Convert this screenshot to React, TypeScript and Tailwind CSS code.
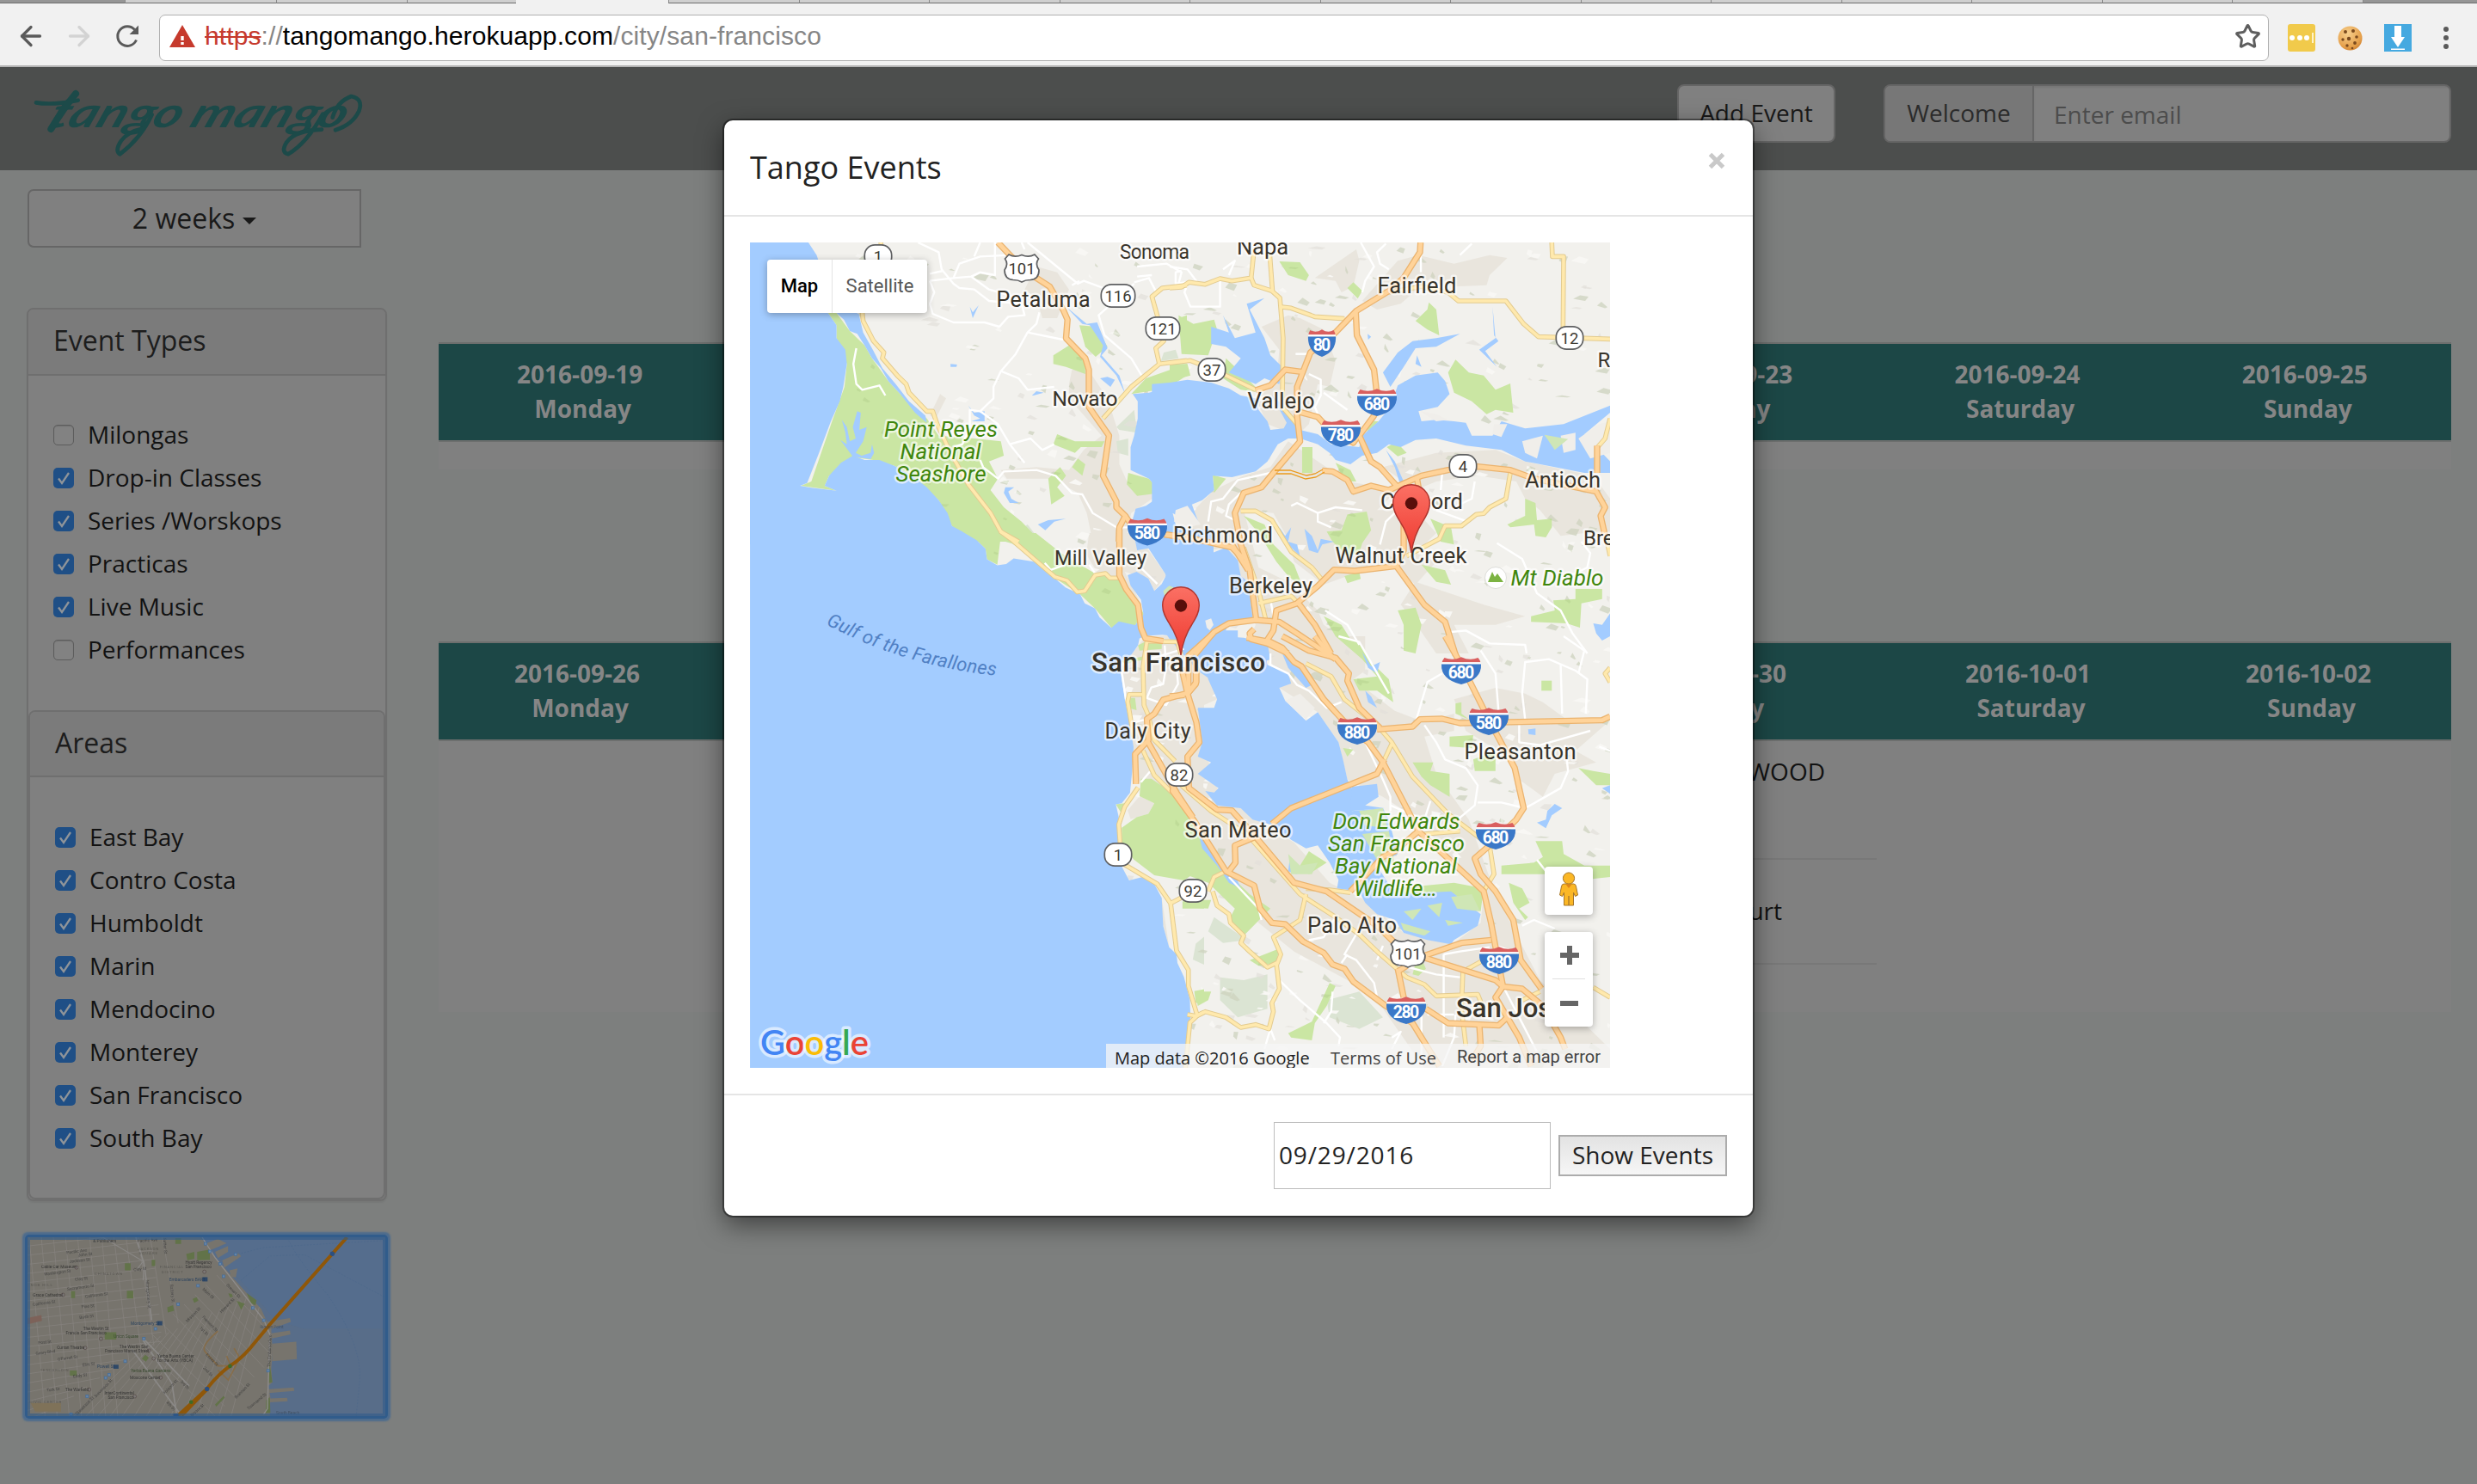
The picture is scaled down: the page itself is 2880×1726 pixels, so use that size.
import React from "react";
import { ArrowLeft, ArrowRight, Star } from "lucide-react";

/* ------------------------------------------------------------------ */
/* Map data: points are stored per tile, each tile has its own scale   */
/* ------------------------------------------------------------------ */

type Tile = "nw" | "ne" | "sw" | "se";
type Shape = [Tile, string];

const TILE: Record<Tile, string> = {
  nw: "translate(840 130) scale(0.34438 0.33333)",
  ne: "translate(1360 260) scale(0.34438 0.33333)",
  sw: "translate(860 620) scale(0.34438 0.40816)",
  se: "translate(1360 740) scale(0.34438 0.33333)",
};

const URBAN: Shape[] = [
  ["nw", "1060,540 1130,560 1170,620 1130,720 1080,720 1060,650 1020,620"],
  ["nw", "1180,900 1235,900 1300,1000 1340,1130 1340,1230 1370,1300 1440,1280 1480,1330 1380,1400 1360,1500 1250,1500 1230,1400 1200,1330 1110,1280 960,1280 940,1250 1060,1240 1170,1250 1220,1180 1280,1130 1170,1000 1170,950"],
  ["nw", "735,985 755,1000 720,1070 700,1060"],
  ["nw", "590,980 640,1020 690,1090 640,1060"],
  ["ne", "490,190 630,90 640,130 620,220 580,240 560,200"],
  ["ne", "770,130 840,110 960,140 1080,110 1140,120 1080,180 1070,215 960,220 880,190 780,280 700,300 650,270"],
  ["ne", "310,360 400,320 440,330 520,370 560,480 540,570 500,560 470,700 430,740 330,700 290,610 360,560 370,440"],
  ["ne", "400,760 600,900 770,930 700,1000 830,1000 900,1080 830,1150 900,1180 830,1260 760,1200 600,1230 520,1260 420,1180 400,1100 350,1010 250,1000 300,1200 400,1250 500,1350 520,1400 660,1500 250,1500 290,1400 240,1230 190,1130 80,1150 20,1070 110,970 150,930 250,880 340,850"],
  ["ne", "900,800 1100,790 1200,830 1430,880 1487,960 1487,1110 1400,1080 1320,1090 1250,1000 1200,960 1170,900 1040,880 900,900 830,930 720,850"],
  ["ne", "830,1250 1060,1330 1200,1370 1100,1400 960,1400 1010,1500 900,1500 820,1380 780,1330"],
  ["sw", "1290,380 1370,295 1500,290 1568,350 1568,800 1500,820 1440,740 1330,700 1320,560"],
  ["sw", "1180,0 1340,0 1440,120 1400,165 1380,130 1300,110 1355,200 1300,160 1220,130 1170,60"],
  ["sw", "1310,790 1350,750 1400,770 1380,800 1320,815"],
  ["sw", "1320,950 1400,1000 1425,1040 1450,1180 1430,1120 1370,980"],
  ["se", "0,0 100,0 160,220 95,250 110,370 160,530 240,600 420,720 540,860 660,920 790,1035 960,1070 1050,1000 1060,900 940,760 840,640 720,560 600,500 570,370 500,265 370,180 320,50 380,0 660,0 660,120 620,150 760,260 860,300 960,270 960,330 860,350 900,480 1010,640 1100,900 1250,1200 1487,1440 1487,1506 860,1506 720,1300 600,1200 420,1100 300,1000 180,830 40,600 0,520"],
  ["se", "960,220 1100,180 1200,200 1260,230 1340,290 1480,300 1370,400 1440,440 1300,480 1260,560 1180,500 1140,420 1000,330"],
  ["se", "0,1400 60,1370 60,1506 0,1506"],
];

const GREEN: Shape[] = [
  ["nw", "355,700 385,702 430,765 480,815 505,860 560,940 600,985 690,1070 730,1130 850,1140 940,1150 950,1200 900,1220 930,1280 905,1320 950,1380 1010,1430 1075,1500 835,1500 775,1445 730,1355 640,1270 580,1235 510,1215 440,1205 360,1270 345,1305 385,1322 265,1305 300,1290 370,1080 412,960 420,880 385,790 385,745"],
  ["nw", "1117,850 1170,815 1225,870 1225,915 1160,890 1117,880"],
  ["nw", "1205,745 1260,750 1300,820 1260,855 1225,820"],
  ["nw", "1130,1125 1190,1150 1290,1150 1280,1170 1210,1170 1190,1190 1117,1160"],
  ["nw", "1100,1280 1140,1240 1160,1270 1130,1310 1155,1340 1110,1370"],
  ["nw", "1200,1210 1225,1230 1215,1270 1180,1240"],
  ["nw", "1370,1260 1440,1280 1480,1330 1400,1340 1365,1300"],
  ["nw", "1380,985 1430,930 1568,880 1568,920 1500,965"],
  ["nw", "1540,720 1568,710 1568,800 1545,780"],
  ["nw", "180,456 205,456 190,466"],
  ["ne", "30,320 80,350 150,335 160,370 130,460 40,455"],
  ["ne", "370,132 440,135 470,180 460,200 400,180"],
  ["ne", "600,225 620,205 650,235 635,262"],
  ["ne", "875,275 900,300 910,390 870,370 830,340 870,300"],
  ["ne", "965,475 1010,520 1060,530 1100,580 1150,558 1155,610 1160,660 1100,650 1070,665 1020,620 960,590 940,520"],
  ["ne", "447,780 482,780 482,870 447,870"],
  ["ne", "560,835 610,860 630,900 590,900"],
  ["ne", "733,780 765,762 800,800 770,812"],
  ["ne", "530,1075 580,1070 600,1015 665,1005 680,1070 650,1115 640,1150 600,1160 550,1110"],
  ["ne", "1140,1050 1200,1020 1200,960 1235,975 1240,1035 1290,1030 1290,1060 1270,1095 1235,1090 1230,1050 1150,1060"],
  ["ne", "880,1030 950,1060 960,1120 915,1110"],
  ["ne", "250,1020 320,1050 350,1120 420,1190 450,1270 400,1230 360,1180 300,1080"],
  ["ne", "1220,1370 1300,1350 1295,1315 1370,1310 1370,1275 1460,1275 1460,1310 1390,1325 1385,1410 1340,1395 1220,1390"],
  ["ne", "770,1350 830,1340 850,1400 830,1500 790,1490 790,1400"],
  ["ne", "520,1370 580,1400 640,1500 560,1440"],
  ["ne", "145,877 190,890 150,940"],
  ["ne", "850,1190 930,1210 950,1260 900,1250"],
  ["ne", "1180,785 1220,755 1225,810 1185,800"],
  ["ne", "1265,735 1340,750 1300,790"],
  ["ne", "190,470 240,520 310,590 240,580 180,540"],
  ["ne", "590,1230 640,1215 645,1240 600,1255"],
  ["ne", "0,490 60,490 70,530 0,550"],
  ["ne", "680,690 705,690 660,740"],
  ["sw", "750,0 800,20 830,45 835,75 870,90 880,20 920,30 1020,85 1050,120 1150,175 1200,215 1255,270 1335,262 1365,230 1330,180 1280,130 1190,110 1090,60 1000,0"],
  ["sw", "1345,320 1380,305 1425,310 1425,330 1350,335"],
  ["sw", "1290,365 1370,350 1370,360 1300,372"],
  ["sw", "1310,470 1335,470 1340,505 1320,500"],
  ["sw", "1355,700 1390,700 1460,740 1540,830 1568,900 1568,950 1500,990 1400,975 1330,930 1290,880 1290,840 1340,810 1380,800 1400,770 1350,750"],
  ["sw", "1270,773 1300,770 1290,800"],
  ["sw", "1495,1050 1568,1040 1568,1070 1495,1070"],
  ["sw", "1535,1305 1568,1300 1568,1330 1540,1340"],
  ["se", "0,560 80,650 190,820 270,900 340,950 250,1045 200,990 220,950 130,860 50,830 0,840"],
  ["se", "560,0 640,20 680,90 740,150 755,230 700,190 640,190 620,150 700,140 650,80"],
  ["se", "45,920 140,920 130,950 50,945"],
  ["se", "820,440 890,440 880,470 945,480 945,560 880,520 850,490"],
  ["se", "965,235 985,230 985,270 1010,290 965,270"],
  ["se", "1255,155 1290,155 1290,190 1255,190"],
  ["se", "1025,430 1100,400 1100,470 1030,470"],
  ["se", "945,350 1025,345 1020,390 945,385"],
  ["se", "1235,715 1325,715 1330,760 1400,800 1487,800 1487,840 1400,850 1270,830 1180,830 1120,830 1120,800 1230,790 1260,770"],
  ["se", "1145,860 1190,880 1215,930 1180,950 1210,980 1200,990 1160,930"],
  ["se", "400,1385 480,1345 540,1210 560,1220 530,1290 490,1350 480,1410 410,1400"],
  ["se", "85,1240 140,1240 130,1270 95,1290"],
  ["se", "660,920 760,880 960,860 1060,880 1050,960 960,900 790,920"],
  ["se", "270,1130 370,1090 360,1140 300,1150"],
  ["se", "470,750 530,790 470,830 440,800"],
  ["se", "585,390 620,395 600,420"],
  ["se", "820,1180 840,1100 865,1160 840,1185"],
  ["se", "1380,460 1430,470 1487,480 1487,520 1440,520"],
];

const DARK_GREEN: Shape[] = [
  ["nw", "1330,1100 1390,1040 1400,1120 1340,1110"],
  ["nw", "1330,1150 1370,1140 1370,1200 1335,1190"],
  ["nw", "1490,840 1530,830 1540,860 1480,870"],
  ["nw", "980,1480 1030,1440 1075,1500"],
  ["sw", "1540,1170 1568,1150 1568,1230 1530,1215"],
  ["se", "150,980 260,1060 180,1070 130,1030"],
  ["se", "170,1190 250,1200 330,1180 330,1300 230,1330 170,1270"],
  ["se", "530,1270 640,1240 720,1330 640,1370 540,1330"],
];

const WATER: Shape[] = [
  ["nw", "93,456 290,456 318,500 350,600 400,680 460,705 475,770 510,835 540,895 585,950 630,1010 685,1060 690,1085 650,1050 600,985 560,940 535,895 505,860 480,815 455,775 430,765 410,725 385,702 355,700 385,745 385,790 415,830 420,880 408,960 396,1010 366,1080 326,1190 286,1295 262,1305 300,1312 385,1322 345,1305 360,1270 400,1225 440,1200 480,1215 530,1215 580,1235 640,1270 690,1310 730,1355 760,1400 775,1445 810,1465 835,1505 93,1510"],
  ["nw", "398,1145 420,1160 415,1120 403,1075 420,1100 430,1150 450,1140 440,1100 455,1045 467,1050 462,1110 487,1100 475,1150 450,1190 470,1200 500,1190 505,1160 512,1190 500,1212 440,1203"],
  ["sw", "35,-5 750,-5 800,20 830,45 835,75 870,92 900,88 925,72 1020,85 1045,115 1100,155 1150,175 1165,200 1200,215 1215,240 1255,270 1280,252 1335,262 1365,230 1450,240 1500,290 1430,290 1370,293 1350,300 1345,320 1320,350 1290,365 1285,390 1300,470 1320,560 1330,610 1325,680 1318,740 1290,770 1270,773 1280,810 1278,860 1290,950 1315,990 1360,980 1400,1000 1425,1040 1430,1120 1450,1180 1475,1200 1478,1225 1500,1265 1520,1330 1522,1380 1510,1440 1505,1530 35,1530"],
  ["nw", "1385,985 1440,980 1500,965 1568,945 1568,1430 1520,1400 1530,1440 1570,1500 1400,1530 1390,1480 1380,1440 1395,1385 1430,1375 1465,1350 1480,1330 1440,1280 1378,1250 1378,1170 1390,1130 1402,1070 1402,1010"],
  ["ne", "-60,560 0,555 60,545 140,555 200,575 240,600 290,610 300,650 330,690 340,720 385,715 395,695 345,600 400,650 440,720 500,735 545,770 640,780 650,740 705,690 745,640 770,565 830,530 905,520 930,550 945,595 905,640 840,655 850,690 900,685 960,690 1000,695 1020,740 1090,740 1120,690 1200,715 1330,700 1487,635 1487,660 1400,735 1487,830 1487,870 1400,870 1300,850 1200,830 1120,790 1000,775 900,750 830,755 780,780 740,770 700,800 650,810 610,840 560,825 540,800 500,770 440,750 400,750 365,770 330,830 290,865 210,885 145,880 150,930 110,965 75,980 100,1050 15,1010 -60,1010"],
  ["ne", "-60,1000 0,1010 20,1075 80,1150 130,1155 190,1130 230,1175 240,1230 265,1250 280,1375 200,1395 180,1440 250,1445 330,1465 340,1520 150,1600 95,1560 0,1450 -20,1420 -10,1250 -30,1120"],
  ["sw", "1345,-10 1370,30 1440,120 1425,145 1400,165 1380,130 1340,110 1310,120 1320,150 1355,190 1365,240 1430,290 1530,300 1600,320 1600,-10"],
  ["se", "110,-20 110,50 130,150 160,220 150,250 95,250 110,370 95,420 140,440 95,480 165,530 150,545 120,540 160,590 240,600 280,640 350,660 410,710 460,740 500,730 540,790 570,850 565,880 640,890 660,930 700,970 760,990 790,1035 870,1060 950,1075 960,1060 1040,1010 1050,970 950,890 760,900 700,800 770,760 740,640 720,600 615,610 620,540 600,500 585,430 570,370 530,310 500,265 460,295 390,225 370,180 410,165 400,130 330,100 320,50 230,35 230,-20"],
  ["se", "615,525 700,515 705,560 660,590 725,600 610,610"],
  ["se", "380,60 440,110 480,170 460,180 400,110"],
  ["ne", "140,360 200,380 180,320 220,400 290,380 260,280 320,260 270,300 320,400 340,460 380,500 370,560 320,540 290,560 200,520 240,470 190,430 140,420"],
  ["ne", "720,520 770,450 820,410 900,400 980,385 900,430 830,435 790,500 745,570"],
  ["ne", "1045,440 1100,400 1090,290 1095,390 1110,410 1065,445 1105,500"],
  ["ne", "370,1060 390,1090 410,1060 400,1110 430,1120 440,1160 410,1130 370,1090"],
  ["ne", "455,1065 480,1090 500,1140 510,1100 555,1110 515,1120 500,1150 470,1140"],
  ["ne", "1430,1395 1460,1400 1487,1360 1487,1440 1460,1455 1440,1430"],
  ["ne", "730,790 760,830 790,900 775,900 760,850"],
  ["ne", "668,385 680,395 670,405"],
  ["ne", "790,470 800,465 798,490"],
  ["ne", "835,460 850,500 830,490"],
  ["nw", "1160,680 1230,740 1265,735 1300,825 1280,850 1340,920 1360,985 1330,920 1275,855 1285,815 1240,745 1215,740"],
  ["nw", "830,1025 850,1050 885,1045 885,1080 840,1080 870,1070 850,1060"],
  ["nw", "835,680 845,700 865,675 845,720"],
  ["nw", "1045,990 1060,975 1085,980 1050,990"],
  ["nw", "770,880 792,882 790,890 770,890"],
  ["nw", "955,1310 985,1310 965,1325 975,1350 1000,1365 970,1365 950,1330"],
  ["nw", "1065,1440 1100,1425 1160,1420 1120,1430 1090,1460"],
  ["nw", "1275,930 1300,925 1325,935 1310,960"],
  ["se", "95,680 170,790 220,830 240,880 200,860 160,800 110,740"],
  ["se", "1240,650 1270,640 1275,610 1300,585 1325,600 1290,625 1270,670"],
  ["se", "650,55 680,105 710,90 700,130 670,110"],
  ["se", "1210,325 1235,322 1235,345 1212,342"],
  ["se", "660,190 680,210 700,250 670,230"],
  ["se", "1460,530 1487,520 1487,550"],
  ["se", "405,780 440,810 430,830 400,820"],
];

const LAND_OVER_WATER: Shape[] = [
  ["ne", "120,1385 140,1378 148,1400 135,1420 125,1410"],
  ["ne", "20,1000 60,985 105,1050 60,1060 15,1040"],
  ["ne", "845,655 900,665 940,685 900,690"],
  ["ne", "1095,700 1140,700 1120,745 1090,735"],
  ["ne", "1190,760 1260,740 1240,820 1200,800"],
  ["ne", "1320,740 1370,730 1370,790 1330,800"],
  ["ne", "1380,750 1450,700 1487,690 1487,800 1420,820"],
  ["se", "390,225 440,200 490,250 460,290"],
];

const ISLAND_GREEN: Shape[] = [
  ["sw", "1430,165 1450,150 1465,155 1445,175 1435,180"],
  ["se", "650,690 740,680 760,800 700,780"],
  ["se", "790,960 850,950 820,990"],
  ["se", "870,940 920,930 910,980"],
  ["se", "930,990 990,1000 940,1010"],
  ["se", "640,610 720,600 735,670 660,660"],
  ["se", "400,760 440,800 500,790 480,830 410,830"],
  ["se", "950,910 1020,900 1048,960 970,950"],
  ["se", "780,1000 880,1030 860,1045 790,1025"],
  ["ne", "1265,737 1345,752 1300,790"],
];

const MINOR: Shape[] = [
  ["nw", "660,456 730,490 740,550 780,600 800,615 850,620 900,660 1010,670 1020,710 965,715 935,750 885,735 780,735 710,705 700,670 715,630 700,590"],
  ["nw", "700,590 780,580 800,530 870,505 970,500"],
  ["nw", "870,456 850,505"],
  ["nw", "920,456 920,570 870,560 840,575 780,580"],
  ["nw", "840,575 900,620 1000,650"],
  ["nw", "700,565 745,555"],
  ["nw", "1020,480 1010,456"],
  ["nw", "1030,456 1200,600 1220,590 1285,615"],
  ["nw", "1180,605 1205,590"],
  ["nw", "1390,600 1270,710 1290,780 1380,860 1415,920"],
  ["nw", "1390,595 1440,580 1470,640"],
  ["nw", "1070,700 1060,740 1030,770 990,845 940,905 915,960 915,1000 870,1045 835,1040 835,1100 810,1160 780,1170"],
  ["nw", "1030,770 1150,795"],
  ["nw", "940,905 1000,930 1030,970 1120,960"],
  ["nw", "870,1045 930,1090 970,1160 1020,1225"],
  ["nw", "970,1160 1040,1140 1080,1180 1120,1160"],
  ["nw", "870,1215 880,1240 930,1280 950,1255 1060,1250 1125,1270 1180,1330 1215,1335 1250,1400 1330,1450 1370,1450"],
  ["nw", "452,825 442,880 452,950 472,970 530,955 550,990"],
  ["nw", "1400,540 1500,530 1550,560 1540,600"],
  ["nw", "1400,575 1450,570"],
  ["ne", "0,150 60,160 90,200 20,210 20,170 40,165"],
  ["ne", "60,210 50,240 70,290 170,290 170,200"],
  ["ne", "180,160 220,130 200,180"],
  ["ne", "645,66 690,150 660,200 650,240"],
  ["ne", "730,70 700,100 710,140 740,160"],
  ["ne", "848,110 848,170"],
  ["ne", "980,110 1020,70"],
  ["ne", "470,525 510,545 510,600 490,640 510,690"],
  ["ne", "425,455 470,455"],
  ["ne", "520,590 600,650"],
  ["ne", "340,870 230,895 180,960 140,970 130,1040"],
  ["ne", "240,940 200,980 190,1020 230,1040"],
  ["ne", "410,985 430,975 500,1010 560,990 650,1000"],
  ["ne", "500,1010 500,1040 545,1060"],
  ["ne", "760,1010 730,1040 710,1120"],
  ["ne", "920,870 915,930"],
  ["ne", "1030,900 1020,960 960,990"],
  ["ne", "900,1000 1005,1040"],
  ["ne", "1105,1115 1190,1170 1240,1290 1320,1350 1360,1430 1410,1500"],
  ["ne", "1390,1110 1420,1150 1410,1200 1350,1230"],
  ["ne", "340,1310 350,1370"],
  ["ne", "950,1425 1000,1420 1080,1465 1200,1470 1205,1500"],
  ["ne", "525,1350 600,1400 640,1470"],
  ["sw", "1030,85 1050,105 1100,90"],
  ["sw", "1180,90 1200,115"],
  ["sw", "1300,65 1350,95 1410,145"],
  ["sw", "1290,395 1305,480"],
  ["sw", "1435,320 1440,380 1430,430 1390,440 1375,470 1440,490 1480,430 1475,380"],
  ["sw", "1380,360 1500,330"],
  ["sw", "1330,540 1375,530"],
  ["sw", "1355,710 1385,680"],
  ["se", "570,0 640,20 740,200"],
  ["se", "340,60 340,100 400,130 430,170 470,190 530,250 580,230"],
  ["se", "660,370 720,500 745,560 745,610"],
  ["se", "860,310 900,370 930,430 1000,460 1040,520 1030,590 960,650"],
  ["se", "745,590 790,610 860,640 880,575"],
  ["se", "830,300 870,160 920,130"],
  ["se", "1050,50 1100,130 1110,260"],
  ["se", "1200,290 1190,200 1200,90 1280,80 1370,120 1410,150 1405,270"],
  ["se", "1330,0 1400,50 1380,130"],
  ["se", "1320,100 1325,270"],
  ["se", "1180,310 1180,370 1250,380 1420,330"],
  ["se", "1335,380 1345,470 1320,530 1200,600 1120,580 1040,580"],
  ["se", "1240,780 1270,820"],
  ["se", "1190,1010 1230,990 1300,1020"],
  ["se", "200,840 300,950 310,990"],
  ["se", "360,1190 440,1270 530,1350 575,1400 570,1430"],
  ["se", "550,1240 545,1310 520,1350"],
  ["se", "320,1440 340,1370 355,1410"],
  ["se", "470,1060 520,1050 560,980"],
  ["se", "630,1040 590,1110 630,1130 690,1210 700,1260"],
  ["se", "600,1110 580,1140"],
  ["se", "690,1100 750,1140 900,1180 980,1190"],
  ["se", "850,1320 850,1500"],
  ["se", "925,1110 925,1400"],
  ["se", "965,1320 960,1400 920,1500"],
  ["se", "925,1110 980,1100 1080,1085"],
  ["se", "870,1320 960,1320"],
  ["se", "1130,1230 1180,1330 1240,1450"],
  ["se", "1100,1080 1160,1100"],
  ["se", "700,1130 720,1080"],
  ["se", "750,1400 780,1380 750,1440"],
  ["se", "1450,385 1487,400"],
];

const SECONDARY: Shape[] = [
  ["nw", "535,456 535,480"],
  ["nw", "472,700 475,730 510,800 545,840 540,860 590,920 620,950 630,980 690,1045 710,1045 725,1090 770,1190 830,1300 905,1400 940,1465 1000,1500"],
  ["sw", "880,-5 920,20 1065,125 1105,135 1140,168 1165,165 1200,120 1235,115 1250,128 1280,128"],
  ["nw", "1285,1070 1380,960 1475,880 1568,868"],
  ["ne", "0,487 70,478 150,510 290,580"],
  ["nw", "1568,605 1485,615 1450,645 1465,700 1490,800 1463,825 1475,880"],
  ["ne", "0,225 40,222 65,205 120,212 170,192 210,200 275,190 285,90"],
  ["ne", "275,190 285,215 345,235 372,260 383,400 380,640 430,700"],
  ["ne", "338,110 347,235"],
  ["ne", "372,290 410,295 490,325 590,332"],
  ["ne", "740,240 850,220 940,240 975,270 1135,270 1195,350 1245,395 1487,403"],
  ["ne", "1290,66 1292,115 1330,115 1328,370"],
  ["ne", "1487,680 1470,750 1445,780"],
  ["ne", "1150,870 1135,960 1080,990 1060,1012 1035,1015 985,1055 930,1055 910,1100 800,1160"],
  ["ne", "240,1003 290,1003 345,1035 410,1145 480,1200 520,1250"],
  ["ne", "250,1130 300,1280 325,1385"],
  ["ne", "300,1325 410,1300 435,1325"],
  ["ne", "1470,1080 1487,1160"],
  ["sw", "1285,890 1280,830 1300,780 1345,725"],
  ["sw", "1300,945 1410,1000 1455,1055 1475,1190 1515,1245 1515,1290 1545,1375 1520,1395 1505,1525"],
  ["sw", "1455,1055 1500,1035"],
  ["sw", "1545,1375 1568,1365"],
  ["sw", "1490,345 1478,310 1375,308 1362,380 1365,490 1380,520 1400,590 1470,650"],
  ["sw", "1360,460 1315,460 1310,480 1330,580"],
  ["sw", "1362,620 1400,690 1460,740"],
  ["se", "20,500 50,530 140,610 260,690 440,900 560,980 640,1040 700,1100 800,1190 860,1215 900,1255 1040,1250 1060,1300"],
  ["se", "460,95 545,140 590,220 700,310 750,370 820,490 940,620 1080,730 1095,830 1060,890"],
  ["se", "725,430 750,375"],
  ["se", "860,690 980,680"],
  ["se", "460,880 540,885 610,895"],
  ["se", "130,890 150,840 190,820"],
  ["se", "145,890 160,940 200,970 205,1000 250,1045 240,1070 270,1100 330,1155 360,1140 370,1230 345,1280 350,1310 335,1370 290,1355 240,1365 190,1330 120,1310 90,1325 60,1320"],
  ["se", "460,900 440,990 350,1050 375,1110 360,1150"],
  ["se", "1060,1130 990,1170 985,1300 1000,1430"],
  ["se", "1487,110 1470,130 1487,160"],
  ["se", "1430,1225 1487,1260"],
  ["se", "1190,1270 1250,1240"],
];

const MOTORWAY: Shape[] = [
  ["nw", "930,456 975,505 1060,580 1105,610 1150,690 1165,725 1160,790 1225,860 1237,900 1237,1030 1305,1130 1285,1270 1330,1360 1330,1380 1360,1410 1340,1450 1338,1500"],
  ["nw", "1360,1410 1380,1440"],
  ["nw", "1490,1475 1568,1485"],
  ["sw", "1282,-10 1282,120 1305,160 1345,205 1355,270 1370,300 1430,308"],
  ["ne", "-10,1086 60,1095 210,1130 250,1170"],
  ["ne", "290,582 340,565 390,510 450,518"],
  ["ne", "847,66 845,100 790,190 740,235 630,305 560,380 475,450 430,570 430,670 440,760 350,870 310,920 250,940 220,1010 240,1120 270,1210 292,1383"],
  ["ne", "628,305 632,390 690,510 700,600 690,670 640,740 680,830 710,850 770,920"],
  ["ne", "790,940 790,1140 765,1195 860,1330 930,1390 965,1505"],
  ["ne", "430,655 500,675 540,720 620,765 650,720"],
  ["ne", "515,862 550,865 600,895 620,935 680,915 740,930 850,880 940,860 1040,848 1150,860 1230,890 1440,935 1470,990 1455,1020 1470,1090"],
  ["ne", "835,890 840,920"],
  ["ne", "1443,775 1443,870"],
  ["ne", "210,1120 265,1210"],
  ["ne", "765,1195 625,1212 555,1208 500,1265 430,1325 360,1350 350,1420 325,1460"],
  ["ne", "85,1505 150,1425 200,1395 290,1383 370,1390 430,1430 560,1520"],
  ["ne", "435,1325 490,1400 545,1500"],
  ["ne", "285,1415 270,1430 275,1450 330,1465 400,1500"],
  ["sw", "1600,285 1515,350 1515,455 1430,475 1400,515 1375,530 1380,590 1335,630 1338,715"],
  ["sw", "1540,360 1540,430 1515,455"],
  ["sw", "1375,590 1435,680 1475,740 1530,810"],
  ["se", "0,210 50,205"],
  ["se", "40,110 60,200 90,300 100,370 60,420 65,530 160,605 210,608 290,700 420,860 530,890 700,1010 800,1110"],
  ["se", "90,110 90,160 60,200"],
  ["se", "260,5 340,20 380,40 420,90 445,105 520,220 600,310 670,370 720,440 840,680 1060,890 1085,1000 1110,1140 1125,1220"],
  ["se", "380,0 470,50 560,75 605,130 600,155 640,250 710,320"],
  ["se", "490,0 550,75"],
  ["se", "700,325 820,315 845,290 920,288 980,303 1460,293 1487,280"],
  ["se", "930,0 990,110 1077,290 1165,460 1195,600 1170,640 1080,730 1030,775 1050,830 1100,890 1160,990 1185,1130 1255,1230"],
  ["se", "345,655 410,600 700,480 725,430"],
  ["se", "15,505 10,540 80,640 190,820 285,870 305,950 345,1000 390,1005 450,1065 520,1105 550,1145 590,1160 620,1205 730,1290 820,1350 880,1450 910,1500"],
  ["se", "200,820 222,790 220,730 290,700"],
  ["se", "610,890 720,770 760,750 840,680"],
  ["se", "865,1300 940,1350 1110,1358 1150,1320"],
  ["se", "850,1118 985,1070 1085,1060"],
  ["se", "850,1118 1100,1200 1125,1222 1190,1230 1260,1290 1320,1400 1335,1440"],
  ["se", "1125,1222 1100,1260 1140,1330 1180,1400 1220,1500"],
  ["se", "770,1160 790,1260"],
  ["se", "800,1150 770,1170"],
  ["se", "1045,1350 1050,1430 1020,1480"],
];

function speckles(n: number, seed: number) {
  let s = seed;
  const rnd = () => {
    s = (s * 16807) % 2147483647;
    return s / 2147483647;
  };
  return Array.from({ length: n }, () => {
    const x = 980 + rnd() * 890;
    const y = 285 + rnd() * 955;
    const w = 3 + rnd() * 8;
    const h = 2 + rnd() * 8;
    return `${x},${y} ${x + w},${y + h * rnd()} ${x + w * 0.6},${y + h} ${x - w * rnd()},${y + h * 0.6}`;
  });
}
const GREY_SPECKLES = speckles(620, 41);
const PALE_SPECKLES = speckles(300, 977);

const Polys = ({ items, fill }: { items: Shape[]; fill: string }) => (
  <>
    {items.map(([t, p], i) => (
      <polygon key={i} points={p} transform={TILE[t]} fill={fill} />
    ))}
  </>
);
const Lines = ({ items, stroke, width }: { items: Shape[]; stroke: string; width: number }) => (
  <>
    {items.map(([t, p], i) => (
      <polyline key={i} points={p} transform={TILE[t]} fill="none" stroke={stroke} strokeWidth={width} strokeLinejoin="round" vectorEffect="non-scaling-stroke" />
    ))}
  </>
);

/* text, x, baseline, width, size */
const TOWNS: [string, number, number, number, number][] = [
  ["Sonoma", 1302, 300.5, 81, 23],
  ["Petaluma", 1158.5, 357, 109, 25],
  ["Novato", 1223.6, 471.5, 76, 24.5],
  ["Napa", 1438, 296, 60, 25.5],
  ["Fairfield", 1601.5, 341, 92, 25.5],
  ["Vallejo", 1450.5, 474.5, 78, 25.5],
  ["Richmond", 1364, 631, 116, 25.5],
  ["Berkeley", 1429, 690, 97, 25.5],
  ["Walnut Creek", 1552.5, 655, 153, 25.5],
  ["Concord", 1605, 592, 96, 25.5],
  ["Antioch", 1773, 567, 88, 25.5],
  ["Mill Valley", 1226, 657, 107, 23.5],
  ["Daly City", 1284.5, 859, 100, 25],
  ["San Mateo", 1377.5, 974, 124, 25.5],
  ["Palo Alto", 1520, 1085, 104, 25.5],
  ["Pleasanton", 1702.5, 883, 130, 25.5],
];
const PARKS: [string, number, number, number][] = [
  ["Point Reyes", 1028, 508, 132],
  ["National", 1046.5, 534, 94],
  ["Seashore", 1041.5, 560, 105],
  ["Don Edwards", 1549.5, 964, 148],
  ["San Francisco", 1544, 990, 159],
  ["Bay National", 1552, 1016, 142],
  ["Wildlife…", 1574, 1042, 97],
  ["Mt Diablo", 1756.5, 681, 108],
];
const PILLS: [string, number, number][] = [
  ["1", 1021, 298], ["116", 1300, 344], ["121", 1352, 382], ["37", 1409, 430], ["12", 1825, 393],
  ["4", 1701, 542], ["82", 1371, 901], ["1", 1300, 994], ["92", 1387, 1036],
];
const INTERSTATES: [string, number, number][] = [
  ["580", 1334, 618.5], ["80", 1537, 399], ["680", 1601, 468], ["780", 1559, 504], ["680", 1699, 780],
  ["880", 1578, 850], ["580", 1731, 839], ["680", 1739, 972], ["880", 1743, 1117], ["280", 1635, 1175],
];
const US_ROUTES: [string, number, number][] = [["101", 1188, 311], ["101", 1637, 1108]];
const PINS: [number, number][] = [[1373, 762], [1641, 643]];

function BayMap() {
  return (
    <svg width="1000" height="960" viewBox="872 282 1000 960" className="block" fontFamily="Roboto, sans-serif">
      <defs>
        <linearGradient id="pin" x1="0" y1="0" x2="0" y2="1">
          <stop offset="0" stopColor="#fb7064" />
          <stop offset="1" stopColor="#ee3a30" />
        </linearGradient>
        <path id="gulf" d="M960 726 Q1052 775 1160 786" />
      </defs>
      <rect x="872" y="282" width="1000" height="960" fill="#f2f1ed" />
      <Polys items={URBAN} fill="#e9e5dd" />
      <Polys items={DARK_GREEN} fill="#dbe4d3" />
      {GREY_SPECKLES.map((p, i) => <polygon key={i} points={p} fill="#e2e0da" opacity=".7" />)}
      {PALE_SPECKLES.map((p, i) => <polygon key={i} points={p} fill="#f8f7f4" />)}
      <Polys items={GREEN} fill="#cae6a3" />
      <g opacity=".18">
        {GREY_SPECKLES.slice(0, 420).map((p, i) => <polygon key={i} points={p} fill="#8fae6a" />)}
      </g>
      <Polys items={WATER} fill="#a3ccff" />
      <Polys items={LAND_OVER_WATER} fill="#f0eeea" />
      <Polys items={ISLAND_GREEN} fill="#cfe6b6" />
      <Lines items={MINOR} stroke="#ffffff" width={2.4} />
      <Lines items={SECONDARY} stroke="#e3cb90" width={5.6} />
      <Lines items={SECONDARY} stroke="#ffe9ad" width={3.6} />
      <Lines items={MOTORWAY} stroke="#ebb470" width={7.4} />
      <Lines items={MOTORWAY} stroke="#ffd399" width={4.8} />
      <g fill="none" stroke="#ea9a1c" strokeWidth="1.3">
        <path d="M1482 547 L1500 547 L1519 553 L1529 551 L1538 546 M1484 551 L1501 551 L1518 557 L1530 555 L1540 549" />
      </g>

      {PILLS.map(([t, x, y], i) => {
        const w = t.length === 3 ? 41 : 33;
        return (
          <g key={i}>
            <rect x={x - w / 2 + 0.8} y={y - 13.2} width={w - 1.6} height={26.4} rx="12" fill="#fff" stroke="#5f6062" strokeWidth="1.7" />
            <text x={x} y={y + 6.5} fontSize="18.5" textAnchor="middle" fill="#3d3a32">{t}</text>
          </g>
        );
      })}
      {US_ROUTES.map(([t, x, y], i) => (
        <g key={i} transform={`translate(${x} ${y})`}>
          <path d="M-15 -15 Q-8 -11 0 -14.5 Q8 -11 15 -15 L19.5 -10 Q15 -4 20 3 Q20 14 10 14.5 Q4 14.5 0 17 Q-4 14.5 -10 14.5 Q-20 14 -20 3 Q-15 -4 -19.5 -10 Z" fill="#fff" stroke="#5f6062" strokeWidth="1.7" />
          <text y="8" fontSize="18.5" textAnchor="middle" fill="#3d3a32">{t}</text>
        </g>
      ))}
      {INTERSTATES.map(([t, x, y], i) => {
        const s = t.length === 3 ? 1 : 0.7;
        return (
          <g key={i} transform={`translate(${x} ${y})`}>
            <g transform={`scale(${s} 1)`}>
              <path d="M-22.5 -9.5 Q-22 -12 -19.5 -15 Q-10 -11 0 -15.8 Q10 -11 19.5 -15 Q22 -12 22.5 -9.5 Z" fill="#d95f5f" />
              <rect x="-22.8" y="-9.8" width="45.6" height="2.4" fill="#fff" />
              <path d="M-23 -7.6 H23 Q24 10 0 16 Q-24 10 -23 -7.6Z" fill="#3a78c8" />
            </g>
            <text y="8.5" fontSize="19.5" fontWeight="700" textAnchor="middle" fill="#fff" textLength={t.length * 10.2}>{t}</text>
          </g>
        );
      })}

      <g fill="#38342b" stroke="#fff" strokeOpacity=".65" strokeWidth="5" strokeLinejoin="round" paintOrder="stroke">
        {TOWNS.map(([t, x, y, w, s]) => (
          <text key={t} x={x} y={y} fontSize={s} textLength={w}>{t}</text>
        ))}
        <text x="1841" y="634" fontSize="24">Bre</text>
        <text x="1857.500" y="427" fontSize="24">R</text>
        <text x="1269" y="781" fontSize="31" fontWeight="500" textLength="202">San Francisco</text>
        <text x="1693" y="1183" fontSize="31" fontWeight="500">San Jose</text>
      </g>
      <g fill="#3f860d" fontStyle="italic" stroke="#fff" strokeOpacity=".65" strokeWidth="5" strokeLinejoin="round" paintOrder="stroke">
        {PARKS.map(([t, x, y, w]) => (
          <text key={t + y} x={x} y={y} fontSize="26" textLength={w}>{t}</text>
        ))}
      </g>
      <circle cx="1739" cy="672" r="12.5" fill="#fff" stroke="#d6d6d0" strokeWidth=".8" />
      <path d="M1730 677 L1735 665 L1738 671 L1741 667 L1748 677Z" fill="#7cb342" />
      <text fontSize="22" fontStyle="italic" fill="#5080c4">
        <textPath href="#gulf" textLength="208">Gulf of the Farallones</textPath>
      </text>

      {PINS.map(([x, y]) => (
        <g key={x} transform={`translate(${x} ${y})`}>
          <path d="M0 0 C-2 -14 -5 -24 -13 -36 C-18 -44 -21.300 -50 -21.300 -58 A21.300 21.300 0 0 1 21.300 -58 C21.300 -50 18 -44 13 -36 C5 -24 2 -14 0 0Z" fill="url(#pin)" stroke="#b1362f" strokeWidth="1.4" />
          <circle cy="-57.500" r="7.200" fill="#590f0b" />
        </g>
      ))}

      <g fontFamily="Lato, sans-serif" fontSize="40" fontWeight="600" stroke="#fff" strokeOpacity=".6" strokeWidth="7" strokeLinejoin="round" paintOrder="stroke">
        <text x="884" y="1227" textLength="126">
          <tspan fill="#4285f4">G</tspan>
          <tspan fill="#ea4335">o</tspan>
          <tspan fill="#fbbc05">o</tspan>
          <tspan fill="#4285f4">g</tspan>
          <tspan fill="#34a853">l</tspan>
          <tspan fill="#ea4335">e</tspan>
        </text>
      </g>
    </svg>
  );
}

/* ------------------------------------------------------------------ */
/* Browser chrome                                                      */
/* ------------------------------------------------------------------ */

const TAB_WIDTHS = [
  "w-[176px]", "w-[152px]", "w-[127px]",
];

function BrowserBar() {
  return (
    <div className="h-[78px] shrink-0 bg-[#f1f1f1] border-b-2 border-[#b4b4b4] flex flex-col">
      <div className="h-1 flex">
        <div className="w-[145px] bg-[#969696] border-b border-[#6e6e6e]" />
        {TAB_WIDTHS.map((w) => (
          <div key={w} className={`${w} bg-[#cfcfcf] border-b border-[#6e6e6e] border-l border-l-[#8a8a8a]`} />
        ))}
        <div className="w-[177px] bg-[#f1f1f1]" />
        {Array.from({ length: 13 }, (_, i) => (
          <div key={i} className="w-[151.500px] bg-[#cfcfcf] border-b border-[#6e6e6e] border-l border-l-[#8a8a8a]" />
        ))}
        <div className="flex-1 bg-[#969696] border-b border-[#6e6e6e] border-l border-l-[#8a8a8a]" />
      </div>
      <div className="flex-1 flex items-center pt-[8px]">
        <div className="w-[185px] flex items-center pl-[18px] -mt-[5px]">
          <ArrowLeft size={36} strokeWidth={2.2} color="#5a5a5a" className="shrink-0" />
          <ArrowRight size={36} strokeWidth={2.2} color="#d3d3d3" className="ml-[20px] shrink-0" />
          <svg width="32" height="32" viewBox="0 0 32 32" className="ml-[22px] shrink-0">
            <path d="M26.500 20.500 A11.300 11.300 0 1 1 24.500 8.500" fill="none" stroke="#5a5a5a" strokeWidth="3" />
            <path d="M29 3.500 V14 H18.500Z" fill="#5a5a5a" />
          </svg>
        </div>
        <div className="w-[2453px] h-[54px] bg-white border border-[#b0b0b0] rounded-[7px] flex items-center pl-[11px] pr-[8px]">
          <svg width="30" height="26" viewBox="0 0 30 26" className="shrink-0 -mt-[5px]">
            <path d="M15 0 L30 26 H0Z" fill="#c63a2d" />
            <path d="M13.300 13 h3.400 v5 h-3.400z M13.300 20 h3.400 v3 h-3.400z" fill="#fff" />
          </svg>
          <div className="ml-[11px] -mt-[5px] text-[30px] tracking-[0.095px] leading-[40px] whitespace-nowrap font-['Liberation_Sans',sans-serif] text-[#868686]">
            <span className="text-[#c63a2d] line-through decoration-2">https</span>://<span className="text-black">tangomango.herokuapp.com</span>/city/san-francisco
          </div>
          <Star size={31} strokeWidth={2.3} strokeLinejoin="miter" color="#5f5f5f" className="ml-auto -mt-[4px]" />
        </div>
        <div className="flex items-center ml-[22px]">
          <div className="w-8 h-8 rounded-[3px] bg-[#f1ca4b] flex items-center justify-center gap-[2.500px]">
            <span className="size-[6px] rounded-full bg-white" />
            <span className="size-[6px] rounded-full bg-white" />
            <span className="size-[6px] rounded-full bg-white" />
            <span className="w-[2px] h-3 bg-[#fff3c8]" />
          </div>
          <svg width="32" height="32" viewBox="0 0 32 32" className="ml-[24px]">
            <defs>
              <radialGradient id="cookie" cx=".4" cy=".3" r=".8">
                <stop offset="0" stopColor="#f6cf8d" />
                <stop offset=".7" stopColor="#e6a14c" />
                <stop offset="1" stopColor="#c9782a" />
              </radialGradient>
            </defs>
            <circle cx="16.500" cy="16.500" r="14" fill="url(#cookie)" />
            <g fill="#7a4a1e">
              <circle cx="11" cy="9" r="2" /><circle cx="20" cy="8" r="2" /><circle cx="15" cy="17" r="2.200" />
              <circle cx="8" cy="18" r="1.700" /><circle cx="24" cy="15" r="1.800" /><circle cx="22" cy="22" r="1.900" />
              <circle cx="13" cy="25" r="1.700" /><circle cx="19" cy="28" r="1.300" />
            </g>
          </svg>
          <svg width="32" height="32" viewBox="0 0 32 32" className="ml-[24px]">
            <rect width="32" height="32" fill="#45a9e0" />
            <path d="M12 2 h8 v13 h4 L16 27 L8 15 h4z M8 28.500 h16 v1.500 h-16z" fill="#fff" />
          </svg>
          <div className="ml-[37px] flex flex-col gap-[4px]">
            <span className="size-[6px] rounded-full bg-[#5a5a5a]" />
            <span className="size-[6px] rounded-full bg-[#5a5a5a]" />
            <span className="size-[6px] rounded-full bg-[#5a5a5a]" />
          </div>
        </div>
      </div>
    </div>
  );
}

/* ------------------------------------------------------------------ */
/* Page behind the dialog (colours are already dimmed by the backdrop) */
/* ------------------------------------------------------------------ */

function Logo() {
  return (
    <svg width="420" height="110" viewBox="0 0 1260 330">
      <g fontFamily="Lato, sans-serif" fontStyle="italic" fontWeight="700" fontSize="146" fill="#1c4a49">
        <text transform="translate(102 174) skewX(-22)" textLength="460" lengthAdjust="spacingAndGlyphs">tango</text>
        <text transform="translate(596 174) skewX(-22)" textLength="540" lengthAdjust="spacingAndGlyphs">mango</text>
      </g>
      <g fill="none" stroke="#1c4a49" strokeLinecap="round" strokeLinejoin="round">
        <path d="M66 88 Q120 98 212 80" strokeWidth="14" />
        <path d="M204 57 Q160 110 118 180" strokeWidth="24" />
        <path d="M470 130 Q430 215 358 268 Q340 255 362 222 Q385 190 440 178" strokeWidth="14" />
        <path d="M1066 128 Q1010 230 945 268 Q918 262 940 226 Q970 185 1062 182" strokeWidth="14" />
        <path d="M1100 140 Q1115 85 1165 66 Q1208 74 1192 118 Q1170 165 1110 184" strokeWidth="14" />
      </g>
    </svg>
  );
}

function PageHeader() {
  return (
    <div className="h-[120px] shrink-0 bg-[#4c4e4d] flex items-start pl-5 pr-[30px]">
      <div className="pt-[12px]"><Logo /></div>
      <div className="ml-auto mt-5 w-[184px] h-[68px] rounded-lg border-2 border-[#656565] bg-[#808080] text-[28px] leading-[62px] text-center text-[#191919]">Add Event</div>
      <div className="ml-[56px] mt-5 w-[660px] h-[68px] rounded-lg border-2 border-[#656565] bg-[#808080] flex overflow-hidden">
        <div className="w-[173px] bg-[#777777] border-r-2 border-[#666] text-[28px] leading-[62px] text-center text-[#2b2b2b]">Welcome</div>
        <div className="flex-1 pl-[23px] text-[28px] leading-[66px] text-[#4c4c4c] shadow-[inset_0_2px_2px_rgba(0,0,0,0.080)]">Enter email</div>
      </div>
    </div>
  );
}

function Check({ label, on }: { label: string; on: boolean }) {
  return (
    <div className="h-[50px] flex items-center pl-[29px]">
      {on ? (
        <svg width="24" height="24" viewBox="0 0 24 24" className="shrink-0">
          <rect width="24" height="24" rx="5" fill="#1f4f86" />
          <path d="M6 12.500 L10 18 L18 6" fill="none" stroke="#8f9499" strokeWidth="2.300" />
        </svg>
      ) : (
        <div className="size-6 shrink-0 rounded-[5px] border border-[#5c5c5c] bg-[#828282] shadow-[inset_0_1px_1px_rgba(0,0,0,0.150)]" />
      )}
      <span className="ml-[16px] -mt-[3px] text-[28px] leading-[40px] text-[#121212] whitespace-nowrap">{label}</span>
    </div>
  );
}

const TYPES: [string, boolean][] = [
  ["Milongas", false], ["Drop-in Classes", true], ["Series /Worskops", true],
  ["Practicas", true], ["Live Music", true], ["Performances", false],
];
const AREAS = ["East Bay", "Contro Costa", "Humboldt", "Marin", "Mendocino", "Monterey", "San Francisco", "South Bay"];

/* text, x, y, rotation, colour */
const STREETS: [string, number, number, number, string][] = [
  ["& Publishers", 267, 57, 0, "#2c2f33"], ["Pacific Ave", 175, 98, -8, "#3b3b3b"], ["John St", 215, 107, -6, "#3b3b3b"],
  ["Pacific Ave", 420, 58, -5, "#3b3b3b"], ["Jackson St", 185, 129, -6, "#3b3b3b"], ["Cable Car Museum", 87, 149, 0, "#2c2c2c"],
  ["Washington St", 97, 174, -8, "#3b3b3b"], ["Clay St", 204, 192, -7, "#3b3b3b"], ["Clay St", 408, 158, -7, "#3b3b3b"],
  ["Sacramento St", 177, 226, -8, "#3b3b3b"], ["Grace Cathedral", 58, 246, 0, "#2c2c2c"], ["California St", 58, 280, -8, "#3b3b3b"],
  ["California St", 240, 252, -8, "#3b3b3b"], ["Pine St", 226, 288, -6, "#3b3b3b"], ["Bush St", 220, 325, -7, "#3b3b3b"],
  ["The Westin St", 232, 365, 0, "#2c2c2c"], ["Francis San Francisco", 172, 381, 0, "#2c2c2c"], ["Union Square", 338, 391, 0, "#2d4224"],
  ["Post St", 76, 414, -6, "#3b3b3b"], ["Curran Theatre", 141, 432, 0, "#2c2c2c"], ["Geary Blvd", 68, 452, -8, "#3b3b3b"],
  ["O'Farrell St", 144, 472, -8, "#3b3b3b"], ["Ellis St", 230, 492, -8, "#3b3b3b"], ["Powell St", 281, 498, 0, "#1f3b5c"],
  ["Eddy St", 198, 532, -8, "#3b3b3b"], ["Turk St", 106, 580, -6, "#3b3b3b"], ["The Warfield", 170, 578, 0, "#2c2c2c"],
  ["InterContinental", 306, 592, 0, "#2c2c2c"], ["San Francisco", 318, 607, 0, "#2c2c2c"], ["The Westin San", 358, 429, 0, "#2c2c2c"],
  ["Francisco Market Street", 308, 444, 0, "#2c2c2c"], ["Yerba Buena Center", 490, 461, 0, "#2c2c2c"], ["for the Arts (YBCA)", 490, 477, 0, "#2c2c2c"],
  ["Yerba Buena Gardens", 398, 511, 0, "#2d4224"], ["Moscone Center", 394, 536, 0, "#2c2c2c"], ["Montgomery St", 397, 346, 0, "#1f3b5c"],
  ["Hyatt Regency", 587, 132, 0, "#2c2c2c"], ["San Francisco", 587, 147, 0, "#2c2c2c"], ["Embarcadero BART", 531, 192, 0, "#1f3b5c"],
  ["Mission St", 594, 338, -46, "#3b3b3b"], ["Fremont St", 644, 320, 46, "#3b3b3b"], ["1st St", 635, 358, 46, "#3b3b3b"],
  ["Main St", 645, 223, 42, "#3b3b3b"], ["Steuart St", 728, 208, 46, "#3b3b3b"], ["Howard St", 712, 306, -46, "#3b3b3b"],
  ["Essex St", 657, 452, 46, "#3b3b3b"], ["2nd St", 647, 498, 46, "#3b3b3b"], ["3rd St", 568, 546, 46, "#3b3b3b"],
  ["4th St", 520, 620, 46, "#3b3b3b"], ["Folsom St", 516, 590, -46, "#3b3b3b"], ["Bryant St", 610, 668, -42, "#3b3b3b"],
  ["Brannan St", 764, 606, -46, "#3b3b3b"], ["Townsend St", 806, 645, -40, "#3b3b3b"], ["The Embarcadero", 882, 495, -88, "#3b3b3b"],
  ["Montgomery St", 450, 190, 86, "#3b3b3b"], ["Battery St", 534, 205, 84, "#3b3b3b"], ["Sutter St", 510, 42, 86, "#3b3b3b"],
  ["Stevenson St", 276, 602, -46, "#3b3b3b"], ["Stevenson St", 212, 664, -46, "#3b3b3b"], ["Rincon Point", 846, 360, 0, "#3f4d5e"], ["South Beach", 902, 660, 0, "#3f4d5e"],
];
const DISTRICTS: [string, number, number, number][] = [
  ["NOB HILL", 50, 212, 75], ["CHINATOWN", 272, 172, 96], ["FINANCIAL", 498, 149, 82], ["DISTRICT", 504, 165, 74],
  ["JACKSON", 422, 83, 72], ["SQUARE", 426, 99, 64], ["TENDERLOIN", 83, 509, 98], ["CIVIC CENTER", 46, 620, 110],
];

function CityThumb() {
  const grid: string[] = [];
  for (let i = 0; i < 20; i++) grid.push(`M39 ${70 + i * 32} L${470 - (i > 12 ? (i - 12) * 45 : -i * 3)} ${20 + i * 32}`);
  for (let i = 0; i < 12; i++) grid.push(`M${45 + i * 42} 39 L${100 + i * 42} ${i > 6 ? 300 + (12 - i) * 40 : 666}`);
  const diag: string[] = [];
  for (let i = 0; i < 14; i++) diag.push(`M${200 + i * 42} 666 L${470 + i * 30} ${400 - i * 14}`);
  for (let i = 0; i < 8; i++) diag.push(`M${430 + i * 38} ${410 - i * 34} L${690 + i * 34} ${666 - i * 34}`);
  return (
    <svg width="416" height="208" viewBox="39 39 1242 627" preserveAspectRatio="none" className="block" fontFamily="Roboto, sans-serif">
      <rect x="39" y="39" width="1242" height="627" fill="#77746d" />
      <g stroke="#85827e" strokeWidth="2.400" fill="none">
        <path d={grid.join("")} />
        <path d={diag.join("")} />
      </g>
      <path d="M300 39 L443 125 L440 190 M443 120 L420 150" stroke="#8a8886" strokeWidth="3" fill="none" />
      <path d="M415 39 L443 130 L470 330 M440 400 L540 550 L556 655 M442 395 L600 560 M570 660 L400 430" stroke="#8b8987" strokeWidth="5" fill="none" />
      <g fill="#627349">
        <path d="M377 130h20v25h-20z M384 227h22v27h-22z M307 372h40v26h-40z M590 98l28-8v24l-24 6z M628 90l44-8v36l-44 2z M612 255l14-6 6 12-14 8z M436 465l12-14 12 10-10 14z M186 506h24v18h-24z M736 236l12 2 4 10-10 2z M765 262l28 10-12 22z M190 228h14v24h-14z M470 118l12 0v22h-12z M524 285l20-8 4 20-22 6z" />
        <path d="M552 42h20v20h-20z M690 625l30-30 4 6-30 32z" />
      </g>
      <path d="M39 322l48-10 2 20-50 12z" fill="#7d6259" />
      <path d="M50 620h105v30h-90z" fill="#7f7259" />
      <path d="M640 39 L662 70 L700 120 L760 190 L800 235 L850 290 L870 335 L885 360 L890 440 L885 500 L889 548 L875 560 L882 600 L880 666 L1281 666 V39Z" fill="#586d89" />
      <path d="M640 39 L700 100 L760 170 L850 270 L900 330 L1000 360 L1281 360 V39Z" fill="#546e90" opacity=".6" />
      <g fill="#77746d">
        <path d="M660 60 L700 45 L730 60 L672 85Z M690 90 L735 70 L735 90 L700 112Z M715 120 L772 95 L780 106 L722 146Z M740 155 L768 148 L762 180 L745 178Z" />
        <path d="M870 335 L950 322 L953 336 L880 362Z M885 376 L950 366 L952 380 L888 394Z M888 412 L972 405 L974 466 L888 474Z M875 572 L963 566 L965 578 L875 585Z M880 604 L940 602 L942 614 L880 618Z" />
      </g>
      <path d="M800 235 L834 260 L830 278 L815 270Z M878 470 L889 548 L876 550Z M868 610 L880 600 L882 655 L866 655Z" fill="#627349" />
      <path d="M645 39 L690 110 L860 330 L880 380 L872 640 L858 660" fill="none" stroke="#8e8c8b" strokeWidth="4" />
      <g fill="none" stroke="#466489" strokeWidth="1.300" strokeDasharray="6 5">
        <path d="M945 50 Q980 120 1080 240 Q1210 430 1190 560 L1180 666" />
        <path d="M780 190 L880 105 L1000 100 L1281 250 M770 98 L860 75 L1281 50" />
      </g>
      <g fill="none" stroke="#8b6a3a" strokeWidth="5">
        <path d="M700 368 Q640 420 655 440 L700 490 L742 490 M756 428 L776 462 L736 540 L700 505 M730 455 L745 490" opacity=".7" />
      </g>
      <path d="M1148 39 L880 345 L810 430 Q780 465 742 490 Q700 520 662 570 L560 666" fill="none" stroke="#8f5709" strokeWidth="12" />
      <path d="M662 575 L575 666" fill="none" stroke="#8f5709" strokeWidth="8" />
      <g fill="#2c4f7f">
        <circle cx="1097" cy="97" r="8" /><circle cx="662" cy="571" r="8" /><rect x="545" y="657" width="18" height="9" />
      </g>
      <g fill="#3d6b28"><circle cx="742" cy="491" r="7" /><circle cx="607" cy="617" r="7" /></g>
      <g fill="#6a86a5" stroke="#3f6c9f" strokeWidth="2">
        {[[657, 62], [672, 89], [708, 132], [720, 176], [631, 209], [562, 274], [821, 287], [859, 330], [483, 360], [443, 395], [378, 474], [322, 521], [310, 532], [246, 597], [190, 660], [874, 507], [761, 99]].map(([x, y]) => (
          <rect key={`${x}-${y}`} x={x - 4.500} y={y - 4.500} width="9" height="9" />
        ))}
      </g>
      <g fill="#2e4868">
        <rect x="646" y="179" width="18" height="15" /><rect x="489" y="333" width="18" height="15" /><rect x="337" y="486" width="18" height="14" />
      </g>
      <g fill="#7b7876" stroke="#4a3b38" strokeWidth="1.500">
        {[[209, 145], [162, 241], [239, 427], [253, 573], [477, 464], [501, 531], [653, 160], [294, 395], [460, 436], [411, 597]].map(([x, y]) => (
          <circle key={`${x}-${y}`} cx={x} cy={y} r="6" />
        ))}
      </g>
      <g fontSize="14.500" opacity=".85">
        {STREETS.map(([t, x, y, r, c], i) => (
          <text key={i} transform={`translate(${x} ${y}) rotate(${r})`} fill={c}>{t}</text>
        ))}
      </g>
      <g fontSize="13" fill="#5a5853">
        {DISTRICTS.map(([t, x, y, w]) => (
          <text key={t} x={x} y={y} textLength={w}>{t}</text>
        ))}
      </g>
    </svg>
  );
}

function Sidebar() {
  return (
    <aside className="w-[510px] shrink-0 pl-[31px] pt-[22px]">
      <div className="ml-px w-[388px] h-[68px] border-2 border-[#666] rounded-l-[7px] bg-[#808080] flex items-center justify-center gap-[9px]">
        <span className="text-[32px] leading-[60px] text-[#191919]">2 weeks</span>
        <svg width="16" height="8" viewBox="0 0 16 8" className="mt-[5px]"><path d="M0 0H16L8 8Z" fill="#191919" /></svg>
      </div>
      <div className="mt-[70px] w-[419px] h-[1039px] rounded-lg border-2 border-[#6f6f6f] bg-[#808080] shadow-[0_2px_2px_rgba(0,0,0,0.060)]">
        <div className="h-[77px] rounded-t-md bg-[#7b7b7b] border-b-2 border-[#6f6f6f] pl-[29px] text-[32px] leading-[72px] text-[#1d1d1d]">Event Types</div>
        <div className="h-[389px] pt-[44px]">
          {TYPES.map(([l, on]) => <Check key={l} label={l} on={on} />)}
        </div>
        <div className="h-[569px] rounded-lg border-2 border-[#6f6f6f]">
          <div className="h-[76px] rounded-t-md bg-[#7b7b7b] border-b-2 border-[#6f6f6f] pl-[29px] text-[32px] leading-[72px] text-[#1d1d1d]">Areas</div>
          <div className="pt-[45px]">
            {AREAS.map((l) => <Check key={l} label={l} on />)}
          </div>
        </div>
      </div>
      <div className="mt-[42px] ml-px w-[416px] h-[208px] rounded-[2px] shadow-[0_0_0_3px_#315c8b,0_0_2px_6px_#4d6c8e] relative">
        <CityThumb />
        <div className="absolute inset-0 border-[3px] border-[#315c8b]/60" />
      </div>
    </aside>
  );
}

const WEEK1 = [
  ["2016-09-19", "Monday"], ["2016-09-20", "Tuesday"], ["2016-09-21", "Wednesday"], ["2016-09-22", "Thursday"],
  ["2016-09-23", "Friday"], ["2016-09-24", "Saturday"], ["2016-09-25", "Sunday"],
];
const WEEK2 = [
  ["2016-09-26", "Monday"], ["2016-09-27", "Tuesday"], ["2016-09-28", "Wednesday"], ["2016-09-29", "Thursday"],
  ["2016-09-30", "Friday"], ["2016-10-01", "Saturday"], ["2016-10-02", "Sunday"],
];

function DayHeads({ days, cols }: { days: string[][]; cols: string }) {
  return (
    <div className={`${cols} h-[116px] border-y-2 border-[#6d6f6e] bg-[#1c4746] text-[#868686] font-bold text-[28px] leading-[40px] text-center pt-[15px]`}>
      {days.map(([d, n]) => (
        <div key={d}>
          <div className="pr-[6px]">{d}</div>
          <div className="pl-px">{n}</div>
        </div>
      ))}
    </div>
  );
}

function Calendar() {
  return (
    <div className="w-[2340px] pt-[200px]">
      <DayHeads days={WEEK1} cols="grid grid-cols-7" />
      <div className="h-8 bg-[#808080]" />
      <div className="mt-[200px]">
        <DayHeads days={WEEK2} cols="grid grid-cols-[328px_326px_325px_327px_382px_326px_326px]" />
      </div>
      <div className="h-[315px] bg-[#808080] grid grid-cols-[1306px_380px_654px]">
        <div />
        <div className="pl-4 pr-[14px] text-[28px] leading-[40px] text-[#121212]">
          <div className="h-[138px] pt-[15px] border-b-2 border-[#787878] pr-[60px] text-right">WOOD</div>
          <div className="h-[122px] pt-[39px] border-b-2 border-[#787878] pr-[110px] text-right">Court</div>
        </div>
        <div />
      </div>
    </div>
  );
}

/* ------------------------------------------------------------------ */
/* Dialog                                                              */
/* ------------------------------------------------------------------ */

function MapDialog() {
  return (
    <div className="absolute top-[140px] left-[842px] w-[1196px] h-[1274px] rounded-[10px] bg-white shadow-[0_0_0_2px_rgba(0,0,0,0.400),0_10px_30px_rgba(0,0,0,0.500)] flex flex-col">
      <div className="h-[112px] border-b-2 border-[#e5e5e5] flex pl-[30px] pr-[32px] justify-between">
        <h4 className="text-[36px] leading-[49px] mt-[30px] text-[#222]">Tango Events</h4>
        <svg width="20" height="20" viewBox="0 0 20 20" className="mt-[37px]">
          <path d="M2.500 2.500 L17.500 17.500 M17.500 2.500 L2.500 17.500" stroke="#c9c9c9" strokeWidth="5" />
        </svg>
      </div>
      <div className="h-[1020px] p-[30px]">
        <div className="relative w-[1000px] h-[960px] overflow-hidden">
          <BayMap />
          <div className="absolute left-5 top-5 h-[62px] flex rounded-[4px] bg-white shadow-[0_2px_8px_rgba(0,0,0,0.300)] font-[Roboto,sans-serif] text-[22px] leading-[62px]">
            <div className="w-[76px] text-center font-medium text-black border-r border-[#e4e4e4]">Map</div>
            <div className="w-[110px] text-center text-[#565656]">Satellite</div>
          </div>
          <div className="absolute right-5 top-[726px] flex flex-col gap-5">
            <div className="w-14 h-14 rounded-[4px] bg-white shadow-[0_2px_8px_rgba(0,0,0,0.300)] flex items-center justify-center">
              <svg width="24" height="40" viewBox="0 0 24 40" className="-mt-[4px]">
                <g fill="#fbb725" stroke="#a6762a" strokeWidth="1">
                  <path d="M6.500 14 H17.500 Q20 14 20.500 17 L22.500 27 L19.500 28.500 L17.500 24 V39 H6.500 V24 L4.500 28.500 L1.500 27 L3.500 17 Q4 14 6.500 14Z" />
                  <circle cx="12" cy="7.500" r="6.600" />
                </g>
                <path d="M8.500 14.500 H15.500 L12 19Z" fill="#e0861a" />
                <path d="M12 28 V39" stroke="#a6762a" strokeWidth="1.300" />
              </svg>
            </div>
            <div className="w-14 h-[110px] rounded-[4px] bg-white shadow-[0_2px_8px_rgba(0,0,0,0.300)] flex flex-col items-center">
              <svg width="22" height="22" viewBox="0 0 22 22" className="mt-[16px] ml-px"><path d="M8 0h6v8h8v6h-8v8h-6v-8h-8v-6h8z" fill="#666" /></svg>
              <div className="mt-[16px] w-[38px] h-px bg-[#e0e0e0]" />
              <div className="mt-[25px] ml-px w-[21px] h-[6px] bg-[#666]" />
            </div>
          </div>
          <div className="absolute right-0 bottom-0 h-7 w-[586px] bg-[#f5f5f5]/75 flex pl-[10px] text-[20px] leading-[33px] whitespace-nowrap">
            <span className="w-[251px] text-[#222]">Map data ©2016 Google</span>
            <span className="w-[147px] text-[#444]">Terms of Use</span>
            <span className="font-[Roboto,sans-serif] text-[#444] leading-[30px]">Report a map error</span>
          </div>
        </div>
      </div>
      <div className="flex-1 border-t-2 border-[#e5e5e5] flex items-center justify-end pr-[30px] gap-[9px]">
        <div className="w-[322px] h-[78px] border border-[#bdbdbd] bg-white pl-[5px] text-[28px] leading-[75px] tracking-[0.850px] text-[#222]">09/29/2016</div>
        <div className="w-[196px] h-[48px] border-2 border-[#acacac] bg-gradient-to-b from-[#e3e3e3] to-[#f6f6f6] text-[28px] leading-[43px] text-center text-[#222]">Show Events</div>
      </div>
    </div>
  );
}

export default function App() {
  return (
    <div className="relative w-[2880px] h-[1726px] overflow-hidden bg-[#7d7f7e] flex flex-col font-['Open_Sans',sans-serif]">
      <BrowserBar />
      <PageHeader />
      <div className="flex flex-1">
        <Sidebar />
        <Calendar />
      </div>
      <MapDialog />
    </div>
  );
}
